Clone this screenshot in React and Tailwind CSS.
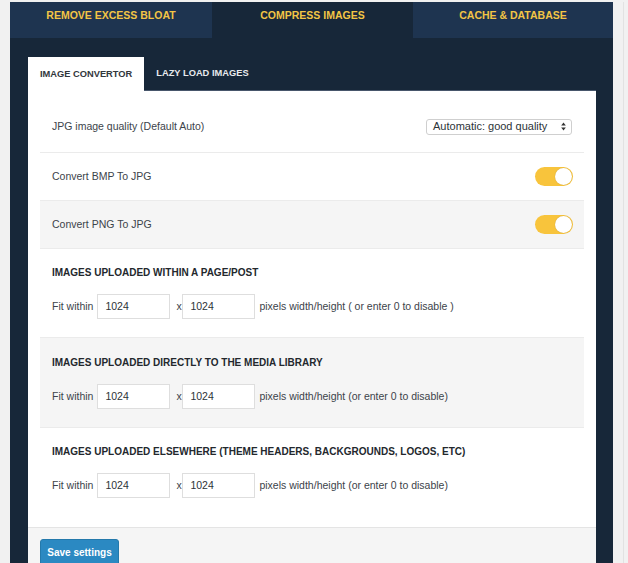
import React from "react";

function Toggle() {
  return (
    <div className="w-[38px] h-[19px] rounded-full bg-[#f8c43c] flex items-center justify-end pr-[1px]">
      <div className="w-[17px] h-[17px] rounded-full bg-white shadow-[0_0_1px_rgba(0,0,0,0.25)]" />
    </div>
  );
}

function SizeRow({ note }) {
  return (
    <div className="flex items-center mt-[15px] text-[10.5px] text-[#3c434a]">
      <span>Fit within</span>
      <div className="ml-[4px] w-[73px] h-[25px] border border-[#dedede] bg-white flex items-center pl-[7px] text-[#2c3338]">1024</div>
      <span className="ml-[6px] mr-[1px] w-[5px]">x</span>
      <div className="w-[73px] h-[25px] border border-[#dedede] bg-white flex items-center pl-[7px] text-[#2c3338]">1024</div>
      <span className="ml-[4px]">{note}</span>
    </div>
  );
}

function Heading({ children }) {
  return <div className="text-[10px] leading-[12px] font-bold text-[#23282d]">{children}</div>;
}

export default function App() {
  return (
    <div className="w-[628px] h-[563px] overflow-hidden bg-[#f1f1f1] pt-[2px] flex items-start font-['Liberation_Sans',Arial,sans-serif]">
      <div className="w-[10px] shrink-0" />
      <div className="w-[603px] shrink-0 bg-[#172739] flex flex-col min-h-[561px]">
        <div className="flex shrink-0 h-[36px] text-[10.5px] font-bold text-[#f3c545]">
          <div className="w-[202px] bg-[#1e3450] flex justify-center pt-[7px] leading-[12px]">REMOVE EXCESS BLOAT</div>
          <div className="w-[201px] bg-[#172739] flex justify-center pt-[7px] leading-[12px]">COMPRESS IMAGES</div>
          <div className="w-[200px] bg-[#1e3450] flex justify-center pt-[7px] leading-[12px]">CACHE &amp; DATABASE</div>
        </div>
        <div className="shrink-0 pl-[18px] pr-[17px] pt-[19px]">
          <div className="flex h-[34px] border-b border-[#47566b] text-[9.3px] font-bold">
            <div className="h-[35px] -mb-px bg-white px-[12px] flex items-center text-[#32373c]">IMAGE CONVERTOR</div>
            <div className="px-[12px] flex items-center text-[#e8eaed]">LAZY LOAD IMAGES</div>
          </div>
          <div className="bg-white">
            <div className="px-[12px] pt-[10px]">
              <div className="h-[52px] border-b border-[#ebebeb] flex items-center justify-between px-[12px] text-[10.5px] text-[#3c434a]">
                <span>JPG image quality (Default Auto)</span>
                <div className="w-[146px] h-[16px] border border-[#cfcfcf] rounded-[3px] flex items-center justify-between pl-[6px] pr-[5px] text-[11px] text-[#2c3338]">
                  <span>Automatic: good quality</span>
                  <svg width="5" height="9" viewBox="0 0 5 9">
                    <path d="M2.5 0.5 L4.8 3.6 L0.2 3.6 Z" fill="#333" />
                    <path d="M2.5 8.5 L4.8 5.4 L0.2 5.4 Z" fill="#333" />
                  </svg>
                </div>
              </div>
              <div className="h-[48px] border-b border-[#ebebeb] flex items-center justify-between pl-[12px] pr-[11px] text-[10.5px] text-[#3c434a]">
                <span>Convert BMP To JPG</span>
                <Toggle />
              </div>
              <div className="h-[48px] border-b border-[#ebebeb] bg-[#f5f5f5] flex items-center justify-between pl-[12px] pr-[11px] text-[10.5px] text-[#3c434a]">
                <span>Convert PNG To JPG</span>
                <Toggle />
              </div>
              <div className="h-[89px] border-b border-[#ebebeb] px-[12px] pt-[18px]">
                <Heading>IMAGES UPLOADED WITHIN A PAGE/POST</Heading>
                <SizeRow note="pixels width/height ( or enter 0 to disable )" />
              </div>
              <div className="h-[90px] border-b border-[#ebebeb] bg-[#f5f5f5] px-[12px] pt-[19px]">
                <Heading>IMAGES UPLOADED DIRECTLY TO THE MEDIA LIBRARY</Heading>
                <SizeRow note="pixels width/height (or enter 0 to disable)" />
              </div>
              <div className="h-[99px] px-[12px] pt-[18px]">
                <Heading>IMAGES UPLOADED ELSEWHERE (THEME HEADERS, BACKGROUNDS, LOGOS, ETC)</Heading>
                <SizeRow note="pixels width/height (or enter 0 to disable)" />
              </div>
            </div>
            <div className="bg-[#f5f5f5] border-t border-[#e4e4e4] px-[12px] pt-[11px] pb-[14px]">
              <div className="w-[79px] h-[27px] bg-[#2b89c2] border border-[#2479ab] rounded-[3px] flex items-center justify-center text-white text-[10px] font-bold">
                Save settings
              </div>
            </div>
          </div>
        </div>
      </div>
      <div className="w-[10px] shrink-0" />
      <div className="flex-1 self-stretch border-l border-[#e2e2e2]" />
    </div>
  );
}
